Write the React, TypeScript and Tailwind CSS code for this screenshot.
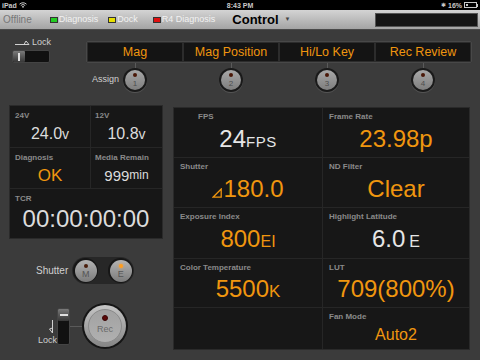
import React from "react";

const ORANGE = "text-[#f0960f]";

function Knob({ n }: { n: string }) {
  return (
    <div className="w-[24px] h-[24px] rounded-full bg-[#1a1a1a] p-[2px] shadow-[0_1px_0_#555]">
      <div className="w-full h-full rounded-full bg-linear-to-b from-[#a8a8a8] to-[#7e7e7e] flex flex-col items-center">
        <div className="w-[4px] h-[4px] rounded-full bg-[#4a1808] mt-[3px]" />
        <div className="text-[8px] leading-none text-[#4e4e4e] mt-[3px]">{n}</div>
      </div>
    </div>
  );
}

function Toggle({ letter, lit }: { letter: string; lit?: boolean }) {
  return (
    <div className="w-[25px] h-[25px] rounded-full bg-[#161616] p-[1.5px]">
      <div className="w-full h-full rounded-full bg-linear-to-b from-[#b4b4b4] to-[#7c7c7c] flex flex-col items-center">
        <div
          className={
            lit
              ? "w-[4px] h-[4px] rounded-full bg-[#ff9d1e] mt-[4px] shadow-[0_0_3px_#ffa030]"
              : "w-[4px] h-[4px] rounded-full bg-[#4a1e0c] mt-[4px]"
          }
        />
        <div className="text-[9px] leading-none text-[#555] mt-[2px]">{letter}</div>
      </div>
    </div>
  );
}

function Label({ children, extra = "" }: { children: React.ReactNode; extra?: string }) {
  return (
    <div className={"text-[8px] font-bold leading-none text-[#8a8a8a] " + extra}>{children}</div>
  );
}

function Cell({
  label,
  children,
  labelExtra = "pl-[6px]",
  border = "",
}: {
  label: string;
  children?: React.ReactNode;
  labelExtra?: string;
  border?: string;
}) {
  return (
    <div className={"flex flex-col border-[#262626] " + border}>
      <Label extra={"pt-[5px] " + labelExtra}>{label}</Label>
      <div className="flex-1 flex items-center justify-center pb-[1px]">{children}</div>
    </div>
  );
}

function Ind({ color, text }: { color: string; text: string }) {
  return (
    <div className="flex items-center">
      <div className={"w-[8px] h-[6px] border border-[#333] mr-[1px] " + color} />
      <span className="text-[9px] text-[#f2f2f2]">{text}</span>
    </div>
  );
}

export default function App() {
  return (
    <div className="w-[480px] h-[360px] overflow-hidden bg-[#3b3b3b] font-['Liberation_Sans',Arial,sans-serif] flex flex-col">
      {/* status bar */}
      <div className="h-[10px] bg-black flex items-center justify-between px-[2px] text-[7px] leading-none text-[#c8c8c8]">
        <div className="w-[70px] flex items-center gap-[2px]">
          <span className="font-bold">iPad</span>
          <svg width="8" height="6" viewBox="0 0 8 6">
            <path d="M0.5 2.2 A5 5 0 0 1 7.5 2.2" stroke="#c8c8c8" strokeWidth="1" fill="none" />
            <path d="M1.8 3.5 A3.2 3.2 0 0 1 6.2 3.5" stroke="#c8c8c8" strokeWidth="1" fill="none" />
            <path d="M4 6 L2.8 4.7 A1.7 1.7 0 0 1 5.2 4.7 Z" fill="#c8c8c8" />
          </svg>
        </div>
        <span className="font-bold">8:43 PM</span>
        <div className="w-[70px] flex items-center justify-end gap-[2px]">
          <span className="text-[6px]">✱</span>
          <span className="font-bold">16%</span>
          <div className="flex items-center">
            <div className="w-[13px] h-[6px] border border-[#c8c8c8] p-[1px]">
              <div className="w-[2px] h-full bg-[#c8c8c8]" />
            </div>
            <div className="w-[1px] h-[3px] bg-[#c8c8c8]" />
          </div>
        </div>
      </div>

      {/* nav bar */}
      <div className="h-[20px] bg-linear-to-b from-[#d4d4d4] to-[#a4a4a4] border-b border-[#4a4a4a] flex items-center">
        <span className="ml-[3px] text-[10px] text-[#777]">Offline</span>
        <div className="ml-[18px]">
          <Ind color="bg-[#22cc22]" text="Diagnosis" />
        </div>
        <div className="ml-[10px]">
          <Ind color="bg-[#e8e000]" text="Dock" />
        </div>
        <div className="ml-[15px]">
          <Ind color="bg-[#e01010]" text="R4 Diagnosis" />
        </div>
        <div className="ml-[17px] flex items-center">
          <span className="text-[13px] font-bold text-black">Control</span>
          <span className="ml-[6px] text-[6px] text-[#444]">▼</span>
        </div>
        <div className="ml-auto mr-[2px] w-[103px] h-[14px] bg-[#151515] border border-[#555]" />
      </div>

      {/* top section */}
      <div className="h-[70px] flex">
        <div className="w-[86px] flex flex-col pl-[12px] pt-[8px]">
          <div className="flex items-end">
            <svg width="16" height="6" viewBox="0 0 16 6" className="ml-[3px] mb-[2px]">
              <path d="M0 5.5 H14" stroke="#d0d0d0" strokeWidth="1" />
              <path d="M9 5.5 L11 2 L14 5.5" stroke="#d0d0d0" strokeWidth="1" fill="none" />
            </svg>
            <span className="ml-[1px] text-[9px] leading-none text-[#cfcfcf]">Lock</span>
          </div>
          <div className="mt-[3px] w-[38px] h-[13px] bg-[#111] border border-[#444] rounded-[2px] flex">
            <div className="w-[12px] h-full rounded-[1px] bg-linear-to-b from-[#7a7a7a] to-[#383838] flex justify-center items-center">
              <div className="w-[2px] h-[8px] bg-[#e0e0e0]" />
            </div>
          </div>
        </div>
        <div className="w-[386px] flex flex-col pt-[11px]">
          <div className="h-[22px] flex bg-[#2c2c2c] border border-[#484848] rounded-[2px] p-[1px] gap-[2px]">
            {["Mag", "Mag Position", "Hi/Lo Key", "Rec Review"].map((t) => (
              <div
                key={t}
                className={"flex-1 bg-[#141414] flex items-center justify-center text-[12.5px] leading-none " + ORANGE}
              >
                {t}
              </div>
            ))}
          </div>
          <div className="flex px-[2px] gap-[2px]">
            {["1", "2", "3", "4"].map((n) => (
              <div key={n} className="flex-1 flex flex-col items-center">
                <div className="w-[1px] h-[5px] bg-[#5a5a5a]" />
                <div className="relative">
                  {n === "1" && (
                    <span className="absolute right-full mr-[4px] top-[7px] text-[9px] leading-none text-[#d0d0d0]">
                      Assign
                    </span>
                  )}
                  <Knob n={n} />
                </div>
              </div>
            ))}
          </div>
        </div>
      </div>

      {/* bottom section */}
      <div className="flex-1 flex">
        {/* left column */}
        <div className="ml-[9px] w-[154px] flex flex-col">
          <div className="mt-[5px] h-[134px] bg-[#171717] border border-[#2a2a2a] flex flex-col">
            <div className="h-[42px] flex border-b border-[#262626]">
              <div className="w-[81px] border-r border-[#262626] flex flex-col">
                <Label extra="pt-[6px] pl-[5px]">24V</Label>
                <div className="flex-1 flex items-center justify-center text-[#dcdcdc]">
                  <span className="text-[16px] leading-none">24.0</span>
                  <span className="text-[14px] leading-none">v</span>
                </div>
              </div>
              <div className="flex-1 flex flex-col">
                <Label extra="pt-[6px] pl-[4px]">12V</Label>
                <div className="flex-1 flex items-center justify-center text-[#dcdcdc]">
                  <span className="text-[16px] leading-none">10.8</span>
                  <span className="text-[14px] leading-none">v</span>
                </div>
              </div>
            </div>
            <div className="h-[41px] flex border-b border-[#262626]">
              <div className="w-[81px] border-r border-[#262626] flex flex-col">
                <Label extra="pt-[6px] pl-[5px]">Diagnosis</Label>
                <div className={"flex-1 flex items-center justify-center text-[17px] leading-none " + ORANGE}>
                  OK
                </div>
              </div>
              <div className="flex-1 flex flex-col">
                <Label extra="pt-[6px] pl-[4px]">Media Remain</Label>
                <div className="flex-1 flex items-center justify-center text-[#dcdcdc]">
                  <span className="text-[15px] leading-none">999</span>
                  <span className="text-[12px] leading-none">min</span>
                </div>
              </div>
            </div>
            <div className="flex-1 flex flex-col">
              <Label extra="pt-[6px] pl-[5px]">TCR</Label>
              <div className="flex-1 flex items-center justify-center pb-[3px] text-[24px] leading-none text-[#dcdcdc]">
                00:00:00:00
              </div>
            </div>
          </div>

          <div className="mt-[18px] flex items-center pl-[27px]">
            <span className="text-[10px] leading-none text-[#d0d0d0] mr-[4px]">Shutter</span>
            <div className="w-[62px] h-[27px] rounded-full bg-[#272727] flex items-center justify-between px-[1px]">
              <Toggle letter="M" />
              <Toggle letter="E" lit />
            </div>
          </div>

          <div className="mt-[19px] flex items-center pl-[27px]">
            <div className="w-[21px] h-[37px] flex flex-col items-end justify-end">
              <svg width="6" height="14" viewBox="0 0 6 14" className="mr-[2px]">
                <path d="M3.5 0 V13" stroke="#d0d0d0" strokeWidth="1" />
                <path d="M3.5 13 L0.5 9 L3.5 8" stroke="#d0d0d0" strokeWidth="1" fill="none" />
              </svg>
              <span className="text-[9px] leading-none text-[#cfcfcf] mt-[2px]">Lock</span>
            </div>
            <div className="w-[13px] h-[37px] bg-[#111] border border-[#444] rounded-[2px] flex flex-col">
              <div className="h-[12px] w-full rounded-[1px] bg-linear-to-b from-[#7a7a7a] to-[#383838] flex items-center justify-center">
                <div className="w-[8px] h-[2px] bg-[#e0e0e0]" />
              </div>
            </div>
            <div className="w-[12px] h-[1px] bg-[#5a5a5a]" />
            <div className="w-[46px] h-[46px] rounded-full bg-[#151515] p-[2px]">
              <div className="w-full h-full rounded-full bg-linear-to-b from-[#c6c6c6] to-[#858585] p-[4px]">
                <div className="w-full h-full rounded-full border border-[#8a8a8a] bg-linear-to-b from-[#a2a2a2] to-[#b0b0b0] flex flex-col items-center">
                  <div className="w-[6px] h-[6px] rounded-full bg-[#5a0808] border border-[#3a0505] mt-[5px]" />
                  <span className="text-[9px] leading-none text-[#6a6a6a] mt-[4px]">Rec</span>
                </div>
              </div>
            </div>
          </div>
        </div>

        {/* right panel */}
        <div className="ml-[10px] mt-[7px] w-[297px] h-[243px] bg-[#171717] border border-[#2a2a2a] grid grid-cols-[149px_1fr] grid-rows-[50px_50px_51px_49px_1fr]">
          <Cell label="FPS" labelExtra="pl-[24px]" border="border-r border-b">
            <span className="text-[24px] leading-none text-[#e6e6e6]">24</span>
            <span className="text-[15px] leading-none text-[#e6e6e6] tracking-[0.5px] mt-[5px]">FPS</span>
          </Cell>
          <Cell label="Frame Rate" border="border-b">
            <span className={"text-[24px] leading-none " + ORANGE}>23.98p</span>
          </Cell>
          <Cell label="Shutter" border="border-r border-b">
            <svg width="10" height="10" viewBox="0 0 10 10" className="mt-[8px] mr-[1px]">
              <path d="M1 9.2 H9.2 V1 Z" stroke="#f0960f" strokeWidth="1.3" fill="none" strokeLinejoin="miter" />
            </svg>
            <span className={"text-[24px] leading-none " + ORANGE}>180.0</span>
          </Cell>
          <Cell label="ND Filter" border="border-b">
            <span className={"text-[24px] leading-none " + ORANGE}>Clear</span>
          </Cell>
          <Cell label="Exposure Index" border="border-r border-b">
            <span className={"text-[24px] leading-none " + ORANGE}>800</span>
            <span className={"text-[16px] leading-none mt-[5px] " + ORANGE}>EI</span>
          </Cell>
          <Cell label="Highlight Latitude" border="border-b">
            <span className="text-[24px] leading-none text-[#e6e6e6]">6.0</span>
            <span className="text-[16px] leading-none text-[#e6e6e6] ml-[4px] mt-[5px]">E</span>
          </Cell>
          <Cell label="Color Temperature" border="border-r border-b">
            <span className={"text-[24px] leading-none " + ORANGE}>5500</span>
            <span className={"text-[17px] leading-none mt-[4px] " + ORANGE}>K</span>
          </Cell>
          <Cell label="LUT" border="border-b">
            <span className={"text-[24px] leading-none " + ORANGE}>709(800%)</span>
          </Cell>
          <div className="border-r border-[#262626]" />
          <Cell label="Fan Mode">
            <span className={"text-[16px] leading-none " + ORANGE}>Auto2</span>
          </Cell>
        </div>
      </div>
    </div>
  );
}
